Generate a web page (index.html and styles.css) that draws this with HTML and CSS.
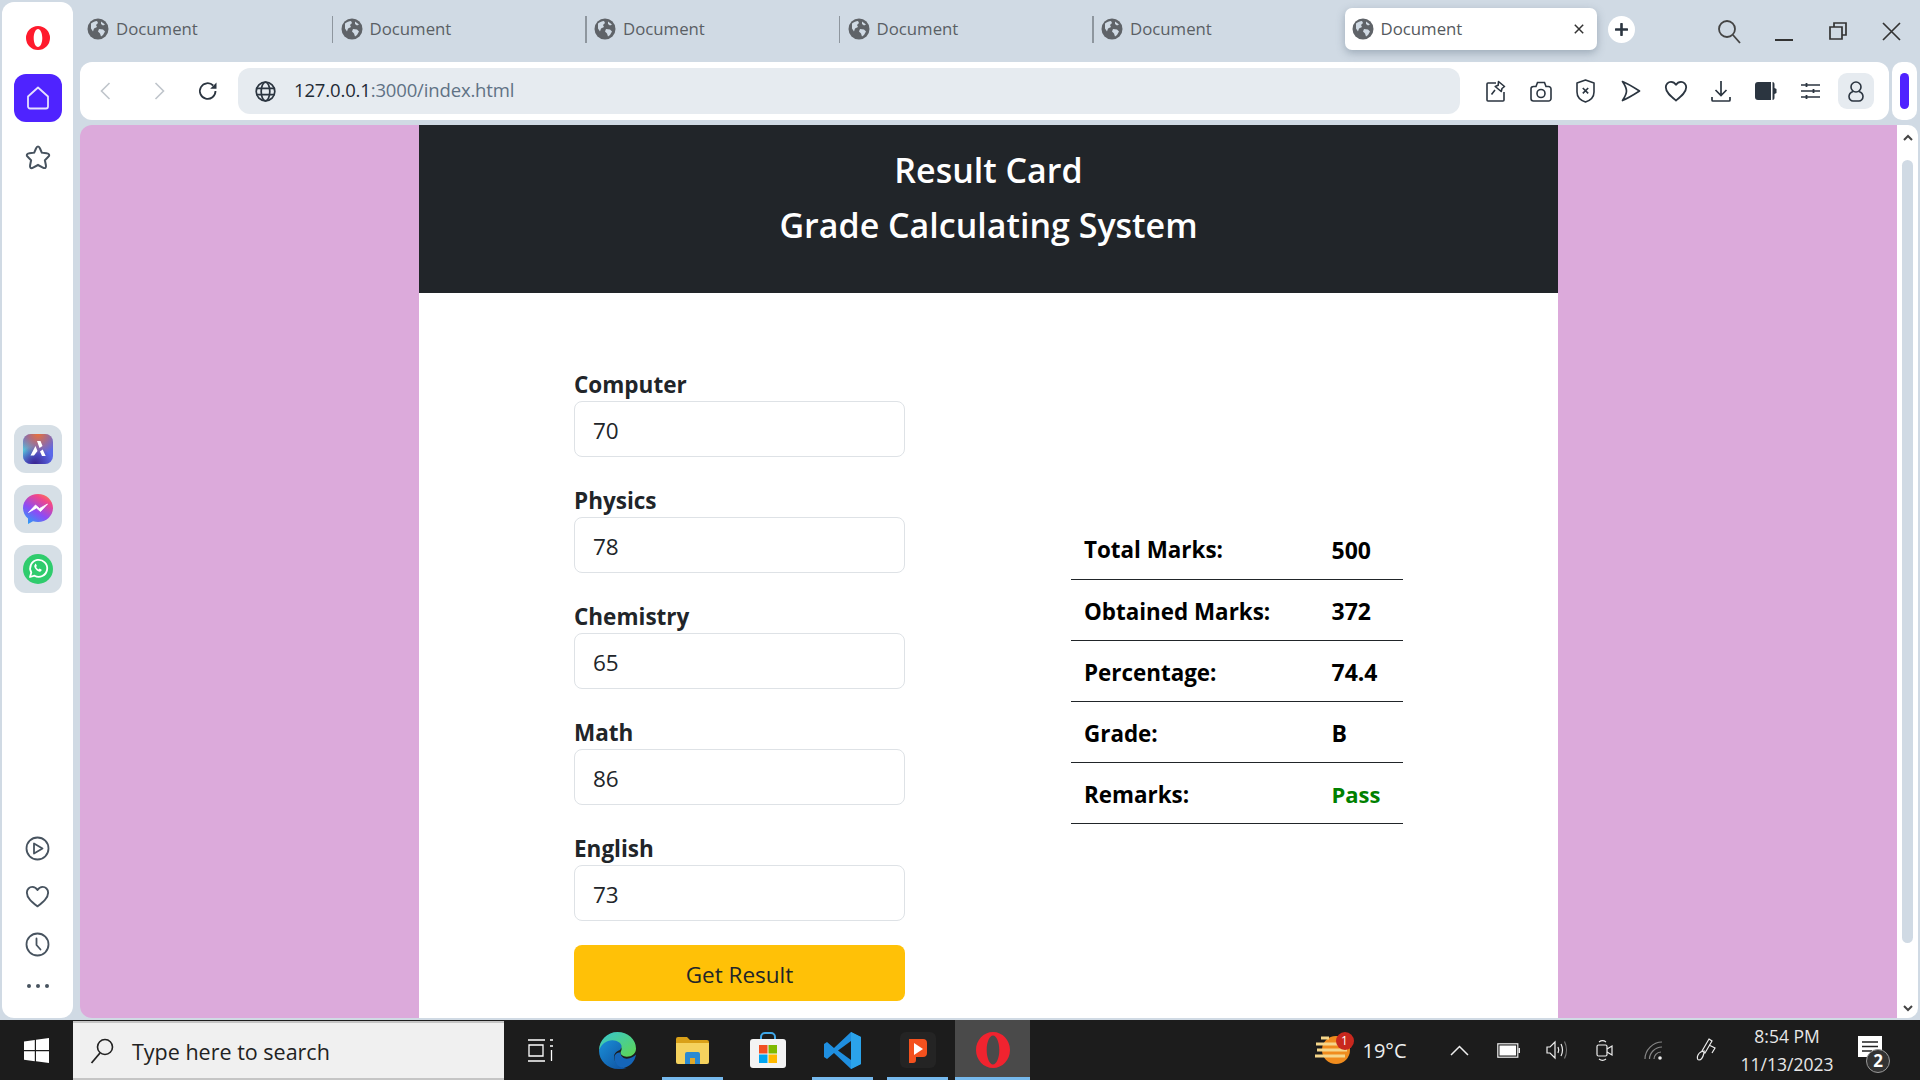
FILE: index.html
```html
<!DOCTYPE html>
<html lang="en">
<head>
<meta charset="utf-8">
<title>Document</title>
<link rel="stylesheet" href="styles.css">
</head>
<body>
<svg class="defs" width="0" height="0">
  <defs>
    <symbol id="earth" viewBox="0 0 22 22">
      <circle cx="11" cy="11" r="10.5" fill="#5f6368"/>
      <path d="M4 5.500c2-1.500 4-2.500 6-2.500l1 2-2 2 1 2-3 1.500-1 3-2-3zM12 11l4 .5 2 2-2 3.500-2 1.500-1-3-2-2zM14 3.500l4 3-2 1-2-1.500z" fill="#d0dae4"/>
    </symbol>
    <symbol id="heart" viewBox="0 0 24 24">
      <path d="M12 21.500C7 17.500 1.800 13.500 1.800 8.300 1.800 5 4.300 2.800 7 2.800c2 0 3.800 1 5 3 1.200-2 3-3 5-3 2.700 0 5.200 2.200 5.200 5.500 0 5.200-5.200 9.200-10.200 13.200z" fill="none" stroke="currentColor" stroke-width="1.800" stroke-linejoin="round"/>
    </symbol>
    <symbol id="opera" viewBox="0 0 24 24">
      <path fill-rule="evenodd" d="M12 0a12 12 0 1 0 0 24 12 12 0 0 0 0-24zm0 3c2.400 0 4.300 4 4.300 9s-1.900 9-4.300 9-4.300-4-4.300-9 1.900-9 4.300-9z" fill="#ff1b2d"/>
    </symbol>
  </defs>
</svg>

<div class="window">
  <div class="main">
    <aside class="sidebar">
      <div class="side-logo"><svg width="24" height="24"><use href="#opera"/></svg></div>
      <button class="side-btn home" aria-label="Home">
        <svg width="24" height="24" viewBox="0 0 24 24"><path d="M2 10.500 12 1.500l10 9v10a2 2 0 0 1-2 2H4a2 2 0 0 1-2-2z" fill="none" stroke="#e6e0ff" stroke-width="1.800" stroke-linejoin="round"/></svg>
      </button>
      <button class="side-btn star" aria-label="Speed dial">
        <svg width="28" height="28" viewBox="0 0 28 28"><path d="M14 2.500c1 0 1.500.8 2 2l1.800 4.200 4.800.6c2.800.4 3.400 1.800 1.700 3.500l-3.400 3.500 1 5c.5 2.500-.8 3.500-3 2.300L14 21l-4.900 2.600c-2.200 1.200-3.500.2-3-2.300l1-5-3.400-3.500c-1.700-1.700-1.100-3.100 1.700-3.500l4.800-.6L12 4.500c.5-1.200 1-2 2-2z" fill="none" stroke="#47535f" stroke-width="2"/></svg>
      </button>
      <div class="side-apps">
        <div class="app-tile">
          <svg width="30" height="30" viewBox="0 0 30 30">
            <defs>
              <radialGradient id="ariaTop" cx=".5" cy="0" r=".7"><stop offset="0" stop-color="#e8703a"/><stop offset="1" stop-color="#e8703a" stop-opacity="0"/></radialGradient>
              <radialGradient id="ariaLeft" cx="0" cy=".55" r=".5"><stop offset="0" stop-color="#56c8d8"/><stop offset="1" stop-color="#56c8d8" stop-opacity="0"/></radialGradient>
              <radialGradient id="ariaBottom" cx=".4" cy="1" r=".6"><stop offset="0" stop-color="#3a2590"/><stop offset="1" stop-color="#3a2590" stop-opacity="0"/></radialGradient>
            </defs>
            <rect width="30" height="30" rx="8" fill="#5a68e8"/>
            <rect width="30" height="30" rx="8" fill="url(#ariaLeft)"/>
            <rect width="30" height="30" rx="8" fill="url(#ariaBottom)"/>
            <rect width="30" height="30" rx="8" fill="url(#ariaTop)"/>
            <path d="M14 7h3.500l2 5-3 2zM12.500 12l2 5-3.500 4.500H7.500zM17 17.500l2.700-2 3 6.500H19z" fill="#fff"/>
          </svg>
        </div>
        <div class="app-tile">
          <svg width="30" height="30" viewBox="0 0 30 30">
            <defs><linearGradient id="msg" x1=".2" y1="1" x2=".8" y2="0"><stop offset="0" stop-color="#2a9df5"/><stop offset=".4" stop-color="#8b4cf6"/><stop offset=".8" stop-color="#f0468c"/><stop offset="1" stop-color="#fb7a50"/></linearGradient></defs>
            <path d="M15 0C6.700 0 0 6.200 0 14c0 4.300 2 8 5 10.500V30l5-2.700c1.600.5 3.300.7 5 .7 8.300 0 15-6.200 15-14S23.300 0 15 0z" fill="url(#msg)"/>
            <path d="M5.500 18.500l7-7.500 4 3.500 8-4.500-7 7.500-4-3.500z" fill="#fff" stroke="#fff" stroke-width=".8" stroke-linejoin="round"/>
          </svg>
        </div>
        <div class="app-tile">
          <svg width="30" height="30" viewBox="0 0 30 30">
            <circle cx="15" cy="15" r="15" fill="#2fcc6d"/>
            <path d="M7 23l1.300-4.500a8.500 8.500 0 1 1 3.200 3.200z" fill="none" stroke="#fff" stroke-width="1.800" stroke-linejoin="round"/>
            <path d="M12 10.500c-1.300 1-.8 3 1 5s4 2.800 5.200 1.500c.6-.6.500-1.300.2-1.500l-1.900-1-.9.900c-1-.3-2-1.300-2.500-2.400l.8-.9-.9-2c-.3-.4-.7-.3-1-.1z" fill="#fff"/>
          </svg>
        </div>
      </div>
      <div class="side-bottom">
        <button class="side-icon" aria-label="Player">
          <svg width="25" height="25" viewBox="0 0 25 25"><circle cx="12.500" cy="12.500" r="11" fill="none" stroke="#47535f" stroke-width="1.800"/><path d="M9 7.500v10l8.500-5z" fill="none" stroke="#47535f" stroke-width="1.800" stroke-linejoin="round"/></svg>
        </button>
        <button class="side-icon heart-icon" aria-label="Bookmarks"><svg width="25" height="25"><use href="#heart"/></svg></button>
        <button class="side-icon" aria-label="History">
          <svg width="25" height="25" viewBox="0 0 25 25"><circle cx="12.500" cy="12.500" r="11" fill="none" stroke="#47535f" stroke-width="1.800"/><path d="M11.500 6.500v6.500l4 4.500" fill="none" stroke="#47535f" stroke-width="1.800" stroke-linecap="round"/></svg>
        </button>
        <div class="side-dots"><span></span><span></span><span></span></div>
      </div>
    </aside>

    <div class="browser">
      <div class="tabbar">
        <div class="tabs">
          <div class="tab"><svg class="tab-icon" width="22" height="22"><use href="#earth"/></svg>Document</div>
          <div class="tab sep"><svg class="tab-icon" width="22" height="22"><use href="#earth"/></svg>Document</div>
          <div class="tab sep"><svg class="tab-icon" width="22" height="22"><use href="#earth"/></svg>Document</div>
          <div class="tab sep"><svg class="tab-icon" width="22" height="22"><use href="#earth"/></svg>Document</div>
          <div class="tab sep"><svg class="tab-icon" width="22" height="22"><use href="#earth"/></svg>Document</div>
          <div class="tab active"><svg class="tab-icon" width="22" height="22"><use href="#earth"/></svg>Document
            <svg class="tab-close" width="10" height="10" viewBox="0 0 10 10"><path d="M.8.800l8.400 8.400M9.200.800.800 9.200" stroke="#333" stroke-width="1.500"/></svg>
          </div>
        </div>
        <div class="newtab"><svg width="13" height="13" viewBox="0 0 13 13"><path d="M6.500 1v11M1 6.500h11" stroke="#2b3540" stroke-width="2.600" stroke-linecap="round"/></svg></div>
        <div class="wincontrols">
          <svg class="win-search" width="24" height="26" viewBox="0 0 24 26"><circle cx="10" cy="10" r="8" fill="none" stroke="#444" stroke-width="1.800"/><path d="M16 16l7 8" stroke="#444" stroke-width="1.800"/></svg>
          <svg class="win-min" width="18" height="2" viewBox="0 0 18 2"><rect width="18" height="2" fill="#333"/></svg>
          <svg class="win-max" width="18" height="18" viewBox="0 0 18 18"><path d="M1 5h12v12H1zM5 5V1h12v12h-4" fill="none" stroke="#333" stroke-width="1.700"/></svg>
          <svg class="win-close" width="19" height="19" viewBox="0 0 19 19"><path d="M1 1l17 17M18 1 1 18" stroke="#333" stroke-width="1.700"/></svg>
        </div>
      </div>

      <div class="toolrow">
        <div class="toolbar">
          <svg class="nav nav-back" width="11" height="18" viewBox="0 0 11 18"><path d="M9.500 1 1.500 9l8 8" fill="none" stroke="#bfc5cb" stroke-width="1.600"/></svg>
          <svg class="nav nav-fwd" width="11" height="18" viewBox="0 0 11 18"><path d="M1.500 1l8 8-8 8" fill="none" stroke="#bfc5cb" stroke-width="1.600"/></svg>
          <svg class="nav nav-reload" width="20" height="20" viewBox="0 0 20 20"><path d="M17.500 10a7.800 7.800 0 1 1-2.300-5.500" fill="none" stroke="#2b3540" stroke-width="1.800"/><path d="M18.500 1.500v6.300h-6.300z" fill="#2b3540"/></svg>
          <div class="urlbar">
            <svg width="21" height="21" viewBox="0 0 21 21" fill="none" stroke="#2b3540" stroke-width="1.700"><circle cx="10.500" cy="10.500" r="9.300"/><ellipse cx="10.500" cy="10.500" rx="4.300" ry="9.300"/><path d="M1.500 7.300h18M1.500 13.700h18"/></svg>
            <span class="url"><span class="url-host">127.0.0.1</span>:3000/index.html</span>
          </div>
          <div class="tools">
            <div class="tool"><svg width="20" height="22" viewBox="0 0 20 22" fill="none" stroke="#2b3540" stroke-width="1.600" stroke-linejoin="round"><path d="M10 3H2a1 1 0 0 0-1 1v16a1 1 0 0 0 1 1h15a1 1 0 0 0 1-1v-8"/><path d="M12.500 1.500l6 5-2.500 2-.8 3-6-5 3-1.300zM9 10l-3.500 4.500"/></svg></div>
            <div class="tool"><svg width="22" height="21" viewBox="0 0 22 21" fill="none" stroke="#2b3540" stroke-width="1.600"><path d="M1 8a2.500 2.500 0 0 1 2.500-2.500H6L7.500 1.500h7L16 5.500h2.500A2.500 2.500 0 0 1 21 8v9.500a2.500 2.500 0 0 1-2.500 2.500h-15A2.500 2.500 0 0 1 1 17.500z"/><circle cx="11" cy="12.500" r="4"/></svg></div>
            <div class="tool"><svg width="19" height="24" viewBox="0 0 19 24" fill="none" stroke="#2b3540" stroke-width="1.600"><path d="M9.500 1 18 4v9c0 5-4 8.500-8.500 10C5 21.500 1 18 1 13V4z" stroke-linejoin="round"/><path d="M6.800 9l5.400 5.400M12.200 9l-5.400 5.400"/></svg></div>
            <div class="tool"><svg width="20" height="22" viewBox="0 0 20 22" fill="none" stroke="#2b3540" stroke-width="1.700" stroke-linejoin="round"><path d="M1.500 1.500c5 2 11.500 6 17 9.500-5.500 3.500-12 7.500-17 9.500 2-3 4-6.500 4-9.500s-2-6.500-4-9.500z"/></svg></div>
            <div class="tool heart-tool"><svg width="24" height="24"><use href="#heart"/></svg></div>
            <div class="tool"><svg width="20" height="22" viewBox="0 0 20 22" fill="none" stroke="#2b3540" stroke-width="1.700"><path d="M10 1v14M4.500 10l5.500 5.500 5.500-5.500M1 17v3a1 1 0 0 0 1 1h16a1 1 0 0 0 1-1v-3"/></svg></div>
            <div class="tool"><svg width="22" height="18" viewBox="0 0 22 18"><path d="M3 0h13v18H3a3 3 0 0 1-3-3V3a3 3 0 0 1 3-3z" fill="#2b3540"/><path d="M17.500 0c1.500 0 2 1 2 2.500V6l2 1v4l-2 1v3.500c0 1.500-.5 2.500-2 2.500z" fill="#2b3540"/></svg></div>
            <div class="tool"><svg width="19" height="18" viewBox="0 0 19 18" fill="none" stroke="#2b3540" stroke-width="1.600"><path d="M0 3h19M0 9h19M0 15h19"/><path d="M5.500 1v4M12.500 7v4M5.500 13v4" stroke-width="1.800"/></svg></div>
            <div class="tool user"><svg width="16" height="21" viewBox="0 0 16 21" fill="none" stroke="#2b3540" stroke-width="1.600"><circle cx="8" cy="6" r="5"/><path d="M5 10.500C2.500 11.500 1 13.500 1 15.500c0 2.500 2 4.500 4 4.500h6c2 0 4-2 4-4.500 0-2-1.500-4-4-5"/></svg></div>
          </div>
        </div>
        <div class="sidepill"><span></span></div>
      </div>

      <div class="viewport">
        <div class="page">
          <div class="card">
            <header class="card-head">
              <h1>Result Card</h1>
              <h1>Grade Calculating System</h1>
            </header>
            <div class="card-body">
              <form class="grade-form">
                <div class="field"><label for="c">Computer</label><input id="c" type="text" value="70"></div>
                <div class="field"><label for="p">Physics</label><input id="p" type="text" value="78"></div>
                <div class="field"><label for="h">Chemistry</label><input id="h" type="text" value="65"></div>
                <div class="field"><label for="m">Math</label><input id="m" type="text" value="86"></div>
                <div class="field"><label for="e">English</label><input id="e" type="text" value="73"></div>
                <button type="button" class="get-result">Get Result</button>
              </form>
              <table class="results">
                <tr><th>Total Marks:</th><td>500</td></tr>
                <tr><th>Obtained Marks:</th><td>372</td></tr>
                <tr><th>Percentage:</th><td>74.4</td></tr>
                <tr><th>Grade:</th><td>B</td></tr>
                <tr><th>Remarks:</th><td class="pass">Pass</td></tr>
              </table>
            </div>
          </div>
        </div>
        <div class="scrollbar">
          <svg width="10" height="7" viewBox="0 0 10 7"><path d="M1 6l4-4 4 4" fill="none" stroke="#444" stroke-width="2"/></svg>
          <div class="thumb"></div>
          <svg width="10" height="7" viewBox="0 0 10 7"><path d="M1 1l4 4 4-4" fill="none" stroke="#444" stroke-width="2"/></svg>
        </div>
      </div>
    </div>
  </div>

  <footer class="taskbar">
    <div class="start"><svg width="25" height="25" viewBox="0 0 25 25"><path d="M0 3.500 10.800 2v10H0zM12 1.800 25 0v12H12zM0 13.200h10.800v10L0 21.700zM12 13.200h13V25l-13-1.800z" fill="#fff"/></svg></div>
    <div class="search">
      <svg width="24" height="26" viewBox="0 0 24 26"><circle cx="15" cy="9" r="7.500" fill="none" stroke="#222" stroke-width="1.600"/><path d="M10 15 1.500 25" stroke="#222" stroke-width="1.800"/></svg>
      <span>Type here to search</span>
    </div>
    <div class="task-apps">
      <div class="task-app task-view"><svg width="25" height="25" viewBox="0 0 25 25" fill="none" stroke="#fff" stroke-width="1.300"><path d="M0 2h17M0 23h17M1 7h14v11H1zM22 2h3M22 8h3M23.500 12v11"/></svg></div>
      <div class="task-app">
        <svg width="37" height="37" viewBox="0 0 36 36">
          <defs>
            <linearGradient id="e1" x1="0" y1="0" x2="1" y2="1"><stop offset="0" stop-color="#36c6d3"/><stop offset="1" stop-color="#5fd64e"/></linearGradient>
            <linearGradient id="e2" x1="0" y1="0" x2="1" y2="1"><stop offset="0" stop-color="#1a8fd8"/><stop offset="1" stop-color="#0f4f9e"/></linearGradient>
          </defs>
          <path d="M18 0c10 0 18 7 18 16 0 5-4 8-9 8-4 0-6-2-6-4 0-1 1-2 1-3.500 0-3-4-5-8-5S2 14 0 18C0 8 8 0 18 0z" fill="url(#e1)"/>
          <path d="M0 18c2-6 7-10 13-10 5 0 9 3 9 6 0 1-1 2-1 3-1 1-4 1-6 5-1 3 0 8 5 11 2 1 4 2 7 2-3 1-6 1-8 1C8 36 0 28 0 18z" fill="url(#e2)"/>
          <path d="M21 20c0 4 3 6 6 6 4 0 7-2 9-4-1 7-6 12-12 13-6-1-9-5-9-10 0-3 2-5 6-5z" fill="#1565b8"/>
        </svg>
      </div>
      <div class="task-app running">
        <svg width="33" height="27" viewBox="0 0 33 27"><path d="M0 2a2 2 0 0 1 2-2h9l3 3h17a2 2 0 0 1 2 2v3H0z" fill="#d9a018"/><path d="M0 6h33v19a2 2 0 0 1-2 2H2a2 2 0 0 1-2-2z" fill="#f5d25e"/><path d="M9 27V17a2 2 0 0 1 2-2h11a2 2 0 0 1 2 2v10h-5v-6h-5v6z" fill="#2b8ad2"/><rect x="14" y="21" width="5" height="6" fill="#e0a82a"/></svg>
      </div>
      <div class="task-app">
        <svg width="36" height="36" viewBox="0 0 36 36"><path d="M11 8V5a4 4 0 0 1 4-4h6a4 4 0 0 1 4 4v3" fill="none" stroke="#3fa7e8" stroke-width="2"/><rect y="7" width="36" height="29" rx="3" fill="#f3f3f3"/><rect x="9" y="13" width="8.500" height="8.500" fill="#f25022"/><rect x="18.500" y="13" width="8.500" height="8.500" fill="#7fba00"/><rect x="9" y="22.500" width="8.500" height="8.500" fill="#00a4ef"/><rect x="18.500" y="22.500" width="8.500" height="8.500" fill="#ffb900"/></svg>
      </div>
      <div class="task-app running">
        <svg width="38" height="37" viewBox="0 0 38 37"><path d="M27 0l10 5v27l-10 5L10 21 3 27 0 25V12l3-2 7 6z" fill="#1f8fe0"/><path d="M27 0l10 5v27l-10 5z" fill="#2ba3ea"/><path d="M27 9v19l-13-9.500z" fill="#1c1c1c"/></svg>
      </div>
      <div class="task-app running">
        <svg width="36" height="36" viewBox="0 0 36 36"><rect width="36" height="36" rx="6" fill="#242424"/><path d="M9 7h14a4 4 0 0 1 4 4v10a4 4 0 0 1-4 4h-7v3a3 3 0 0 1-3 3H9z" fill="#f4511e"/><path d="M14 11l9 6-9 6z" fill="#fff"/></svg>
      </div>
      <div class="task-app running current">
        <svg width="34" height="36" viewBox="0 0 34 36"><path fill-rule="evenodd" d="M17 0C7.600 0 0 8 0 18s7.600 18 17 18 17-8 17-18S26.400 0 17 0zm0 3.500c3.500 0 6.300 6.500 6.300 14.500S20.500 32.500 17 32.500 10.700 26 10.700 18 13.500 3.500 17 3.500z" fill="#f0232f"/></svg>
      </div>
    </div>
    <div class="tray">
      <div class="tray-item weather">
        <svg width="37" height="30" viewBox="0 0 37 30"><circle cx="22" cy="15" r="14" fill="#f08c1e"/><path d="M7 3h8M2 9h24M3 15h30M1 21h30" stroke="#f5d68a" stroke-width="3"/></svg>
        <span class="badge">1</span>
      </div>
      <div class="tray-item temp">19°C</div>
      <div class="tray-item t-chev"><svg width="19" height="11" viewBox="0 0 19 11"><path d="M1 10 9.500 1.500 18 10" fill="none" stroke="#eee" stroke-width="1.500"/></svg></div>
      <div class="tray-item t-batt"><svg width="23" height="15" viewBox="0 0 23 15"><rect x=".8" y=".8" width="20" height="13.400" fill="none" stroke="#eee" stroke-width="1.200"/><rect x="2.500" y="2.500" width="16.600" height="10" fill="#fff"/><rect x="21.500" y="5" width="1.500" height="5" fill="#eee"/></svg></div>
      <div class="tray-item t-spk"><svg width="22" height="20" viewBox="0 0 22 20" fill="none" stroke="#eee" stroke-width="1.200"><path d="M1 7v6h3l5 5V2L4 7z"/><path d="M12 7c1 2 1 4 0 6M15 4c2 4 2 8 0 12"/><path d="M18.500 1.500c2.500 5 2.500 12 0 17" stroke="#777"/></svg></div>
      <div class="tray-item t-cam"><svg width="17" height="23" viewBox="0 0 17 23" fill="none" stroke="#eee" stroke-width="1.200"><rect x="1" y="6" width="10" height="11" rx="1.500"/><path d="M11 10l5-3v9l-5-3M3 3c2-1.500 5-1.500 7 0M3 20c2 1.500 5 1.500 7 0"/></svg></div>
      <div class="tray-item t-wifi"><svg width="19" height="19" viewBox="0 0 19 19" fill="none" stroke="#888" stroke-width="1.200"><path d="M1 18C1 9 9 1 18 1M5.500 18C5.500 12 11 6 18 6M10 18c0-3 2.500-7 7-7"/><circle cx="16" cy="17" r="1.800" fill="#eee" stroke="none"/></svg></div>
      <div class="tray-item t-pen"><svg width="20" height="24" viewBox="0 0 20 24" fill="none" stroke="#eee" stroke-width="1.200"><path d="M13 1l3 2-7 12-3-2zM8 15c-1 4-3 7-5 7s-2-3-1-5 4-4 7-4M13 7l6 3-3 5"/></svg></div>
      <div class="tray-item clock"><span>8:54 PM</span><span>11/13/2023</span></div>
      <div class="tray-item notif">
        <svg width="25" height="29" viewBox="0 0 25 29"><path d="M0 0h24v21h-6l-5 7v-7H0z" fill="#fff"/><path d="M4 6h16M4 10.500h16M4 15h10" stroke="#222" stroke-width="1.400"/></svg>
        <span class="notif-count">2</span>
      </div>
    </div>
  </footer>
</div>
</body>
</html>
```

FILE: styles.css
```css
* { box-sizing: border-box; }
html, body { margin: 0; height: 100%; overflow: hidden; }
body { font-family: "Open Sans", "Noto Sans", "Liberation Sans", sans-serif; background: #d0dae4; color: #212529; }
.defs { display: block; height: 0; }
button { border: 0; background: none; padding: 0; font: inherit; }

.window { width: 1920px; height: 1080px; display: flex; flex-direction: column; }
.main { flex: 1; min-height: 0; display: flex; padding: 2px; gap: 7px; }

/* sidebar */
.sidebar { width: 71px; background: #fff; border-radius: 12px; display: flex; flex-direction: column; align-items: center; color: #47535f; }
.side-logo { height: 24px; margin-top: 24px; }
.side-btn { width: 48px; height: 48px; display: flex; align-items: center; justify-content: center; }
.home { background: #4f23ff; border-radius: 12px; margin-top: 24px; }
.star { margin-top: 12px; }
.side-apps { margin-top: 243px; display: flex; flex-direction: column; gap: 12px; }
.app-tile { width: 48px; height: 48px; border-radius: 12px; background: #d6dfe6; display: flex; align-items: center; justify-content: center; }
.side-bottom { margin-top: auto; display: flex; flex-direction: column; align-items: center; padding-bottom: 30px; }
.side-icon { width: 48px; height: 48px; display: flex; align-items: center; justify-content: center; color: #47535f; }
.side-dots { display: flex; gap: 5px; margin-top: 16px; }
.side-dots span { width: 4px; height: 4px; border-radius: 50%; background: #47535f; }

/* browser column */
.browser { flex: 1; min-width: 0; display: flex; flex-direction: column; }
.tabbar { height: 60px; display: flex; align-items: flex-start; padding-top: 6px; }
.tabs { display: flex; width: 1516px; flex: none; }
.tab { width: 253.500px; height: 41.500px; display: flex; align-items: center; gap: 7px; padding-left: 7px; font-size: 16.800px; color: #5a5f64; position: relative; flex: none; }
.tab.sep::before { content: ""; position: absolute; left: -2px; top: 8px; width: 1.500px; height: 27px; background: #8e969e; }
.tab.active { width: 252px; margin-left: -3px; padding-left: 7px; background: #fff; border-radius: 7px; box-shadow: 0 3px 9px rgba(60, 80, 100, .35); color: #55595e; }
.tab-close { position: absolute; right: 13px; top: 16px; }
.newtab { width: 27px; height: 27px; margin: 8px 0 0 12px; border-radius: 50%; background: #fff; display: flex; align-items: center; justify-content: center; flex: none; }
.wincontrols { flex: 1; display: flex; align-items: center; height: 46px; }
.win-search { margin-left: 82px; margin-top: 2px; }
.win-min { margin-left: 34px; margin-top: 17px; }
.win-max { margin-left: 36px; }
.win-close { margin-left: 35px; }

.toolrow { height: 58px; display: flex; gap: 3px; }
.toolbar { width: 1809px; background: #fff; border-radius: 12px; display: flex; align-items: center; padding: 0 6px 0 20px; }
.nav { flex: none; }
.nav-fwd { margin-left: 43px; }
.nav-reload { margin-left: 33px; }
.urlbar { width: 1222px; height: 46px; margin-left: 20px; background: #e6ebf0; border-radius: 12px; display: flex; align-items: center; padding-left: 17px; gap: 18px; }
.url { font-size: 18.500px; line-height: 24px; margin-top: -2px; letter-spacing: -.15px; color: #5f7285; }
.url-host { color: #1f2a35; }
.tools { display: flex; align-items: center; margin-left: 13px; color: #2b3540; }
.tool { width: 45px; height: 36px; display: flex; align-items: center; justify-content: center; }
.tool.user { width: 36px; border-radius: 9px; background: #e6ebf0; margin-left: 5px; }
.sidepill { width: 25px; background: #fff; border-radius: 10px; display: flex; justify-content: center; align-items: center; }
.sidepill span { width: 9px; height: 36px; border-radius: 5px; background: #4f23ff; }

/* page */
.viewport { flex: 1; min-height: 0; display: flex; margin-top: 5px; }
.page { width: 1817px; background: #dcaadb; border-radius: 12px 0 0 12px; overflow: hidden; }
.scrollbar { width: 21px; background: #fff; border-radius: 0 10px 10px 0; display: flex; flex-direction: column; align-items: center; padding: 9px 0 6px; }
.thumb { width: 11px; flex: 1; background: #d0dae4; border-radius: 6px; margin: 19px 0 62px; }

.card { width: 1139px; margin: 0 auto; background: #fff; height: 100%; }
.card-head { height: 168px; background: #212529; color: #fff; text-align: center; padding-top: 18px; }
.card-head h1 { margin: 0; font-size: 34px; line-height: 55px; font-weight: 600; }
.card-body { display: flex; padding: 76px 0 0 155px; }
.grade-form { width: 331px; display: flex; flex-direction: column; }
.field { margin-bottom: 28px; display: flex; flex-direction: column; }
.field label { font-size: 22.500px; line-height: 32px; font-weight: 700; color: #212529; }
.field input { height: 56px; width: 100%; padding: 2px 18px 0; border: 1.500px solid #dee2e6; border-radius: 8px; font: 400 22.500px "Open Sans", sans-serif; color: #212529; background: #fff; }
.get-result { height: 56px; margin-top: -4px; padding-top: 2px; background: #ffc107; border-radius: 8px; font-size: 22.500px; color: #212529; }
.results { width: 332px; margin: 149px 0 0 166px; height: fit-content; border-collapse: collapse; font-size: 23px; font-weight: 700; color: #000; }
.results tr { height: 61px; border-bottom: 1.500px solid #212529; }
.results th { text-align: left; font-size: 22.400px; font-weight: 700; padding: 3px 0 0 13px; width: 260.500px; }
.results td { padding: 3px 0 0; }
.results .pass { color: #008000; font-size: 22px; }

/* taskbar */
.taskbar { height: 60px; flex: none; background: #1c1c1c; display: flex; color: #eee; }
.start { width: 73px; display: flex; align-items: center; justify-content: center; }
.search { width: 431px; margin-top: 1px; background: #f0f0f0; border: 2px solid #c5c5c5; border-left: 0; border-right: 0; display: flex; align-items: center; gap: 18px; padding-left: 17px; color: #222; font-size: 21.500px; }
.search span { margin-top: 2px; }
.task-apps { display: flex; margin-left: 1px; }
.task-app { width: 75px; display: flex; align-items: center; justify-content: center; position: relative; }
.task-view { padding-right: 5px; }
.task-app.running::after { content: ""; position: absolute; left: 7px; right: 7px; bottom: 0; height: 3px; background: #76b9ed; }
.task-app.current { background: #4a4a4a; }
.task-app.current::after { left: 0; right: 0; }
.tray { margin-left: auto; display: flex; padding-right: 22px; }
.tray-item { width: 50px; display: flex; align-items: center; justify-content: center; position: relative; }
.weather { width: 53px; }
.badge { position: absolute; right: 5px; top: 12px; width: 18px; height: 18px; border-radius: 50%; background: #c8281e; color: #fff; font-size: 12px; line-height: 18px; text-align: center; }
.temp { width: 75px; justify-content: flex-start; padding-left: 4px; font-size: 20px; }
.t-chev { width: 52px; }
.t-batt { width: 45.500px; }
.t-spk { width: 52px; }
.t-cam { width: 43px; }
.t-wifi { width: 54px; }
.t-pen { width: 52px; }
.clock { width: 110px; flex-direction: column; font-size: 17.500px; line-height: 28px; color: #e8e8e8; }
.notif { width: 56px; }
.notif-count { position: absolute; left: 24px; top: 29px; width: 24px; height: 24px; border-radius: 50%; background: #333; border: 1.500px solid #999; color: #fff; font-size: 17px; font-weight: 700; line-height: 21px; text-align: center; }
```
